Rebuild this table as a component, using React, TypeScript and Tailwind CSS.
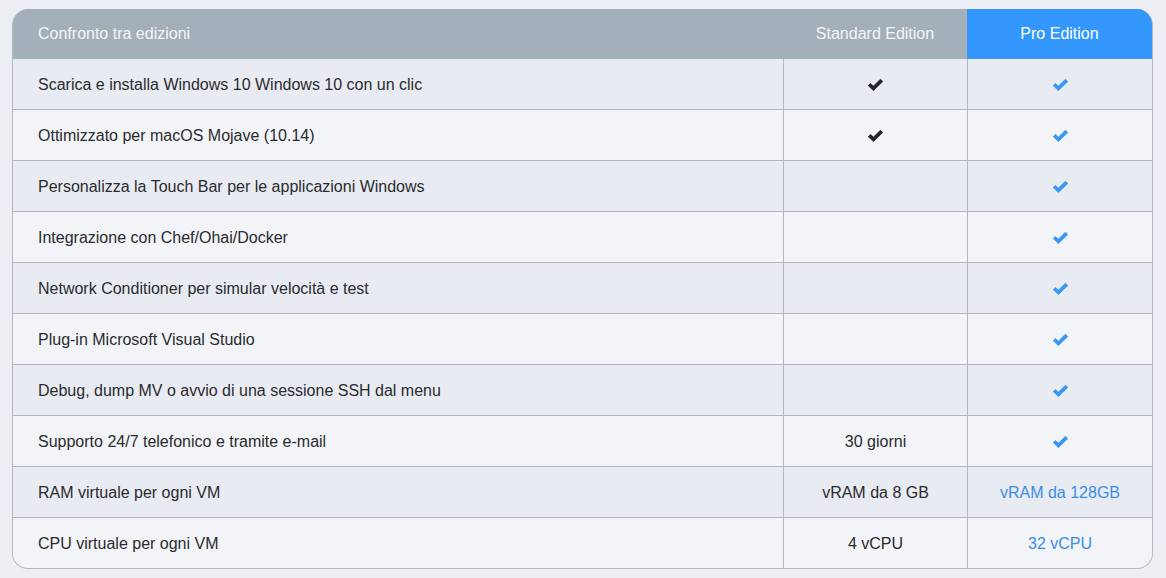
import React from "react";

const Check = ({ blue }: { blue?: boolean }) => (
  <svg width="17" height="14" viewBox="0 0 17 14" className="inline-block">
    <path
      d="M1.2 7.6 L3.6 5.4 L6.4 8.2 L13.4 1.2 L15.8 3.5 L6.4 12.6 Z"
      fill={blue ? "#3797f5" : "#222428"}
      strokeLinejoin="round"
      stroke={blue ? "#3797f5" : "#222428"}
      strokeWidth="0.8"
    />
  </svg>
);

type Cell = { kind: "check" } | { kind: "text"; value: string } | { kind: "none" };

const rows: { label: string; std: Cell; pro: Cell }[] = [
  { label: "Scarica e installa Windows 10 Windows 10 con un clic", std: { kind: "check" }, pro: { kind: "check" } },
  { label: "Ottimizzato per macOS Mojave (10.14)", std: { kind: "check" }, pro: { kind: "check" } },
  { label: "Personalizza la Touch Bar per le applicazioni Windows", std: { kind: "none" }, pro: { kind: "check" } },
  { label: "Integrazione con Chef/Ohai/Docker", std: { kind: "none" }, pro: { kind: "check" } },
  { label: "Network Conditioner per simular velocità e test", std: { kind: "none" }, pro: { kind: "check" } },
  { label: "Plug-in Microsoft Visual Studio", std: { kind: "none" }, pro: { kind: "check" } },
  { label: "Debug, dump MV o avvio di una sessione SSH dal menu", std: { kind: "none" }, pro: { kind: "check" } },
  { label: "Supporto 24/7 telefonico e tramite e-mail", std: { kind: "text", value: "30 giorni" }, pro: { kind: "check" } },
  { label: "RAM virtuale per ogni VM", std: { kind: "text", value: "vRAM da 8 GB" }, pro: { kind: "text", value: "vRAM da 128GB" } },
  { label: "CPU virtuale per ogni VM", std: { kind: "text", value: "4 vCPU" }, pro: { kind: "text", value: "32 vCPU" } },
];

function renderCell(c: Cell, blue: boolean) {
  if (c.kind === "check") return <Check blue={blue} />;
  if (c.kind === "text")
    return <span className={blue ? "text-[#3a8ee6]" : "text-[#2a2b2e]"}>{c.value}</span>;
  return null;
}

export default function App() {
  return (
    <div
      className="w-[1166px] h-[578px] bg-[#eceef4] pt-[9px] pl-[12px]"
      style={{ fontFamily: '"Liberation Sans", Arial, sans-serif' }}
    >
      <div className="w-[1141px] rounded-[16px] overflow-hidden border-x border-b border-[#b4b7bf] text-[16px]">
        <div className="grid grid-cols-[770px_184px_185px] h-[50px] bg-[#a3afb9] text-white">
          <div className="flex items-center pl-[25px] text-[#f4f6f8]">Confronto tra edizioni</div>
          <div className="flex items-center justify-center text-[#f4f6f8]">Standard Edition</div>
          <div className="flex items-center justify-center bg-[#3497fd]">Pro Edition</div>
        </div>
        {rows.map((r, i) => (
          <div
            key={i}
            className={`grid grid-cols-[770px_184px_185px] ${
              i === rows.length - 1 ? "h-[50px]" : "h-[51px] border-b border-[#b4b7bf]"
            } ${i % 2 === 0 ? "bg-[#e9ebf2]" : "bg-[#f3f4f8]"}`}
          >
            <div className="flex items-center pl-[25px] pt-[2px] text-[#2a2b2e]">{r.label}</div>
            <div className="flex items-center justify-center pt-[2px] border-l border-[#b4b7bf]">{renderCell(r.std, false)}</div>
            <div className="flex items-center justify-center pt-[2px] border-l border-[#b4b7bf]">{renderCell(r.pro, true)}</div>
          </div>
        ))}
      </div>
    </div>
  );
}
